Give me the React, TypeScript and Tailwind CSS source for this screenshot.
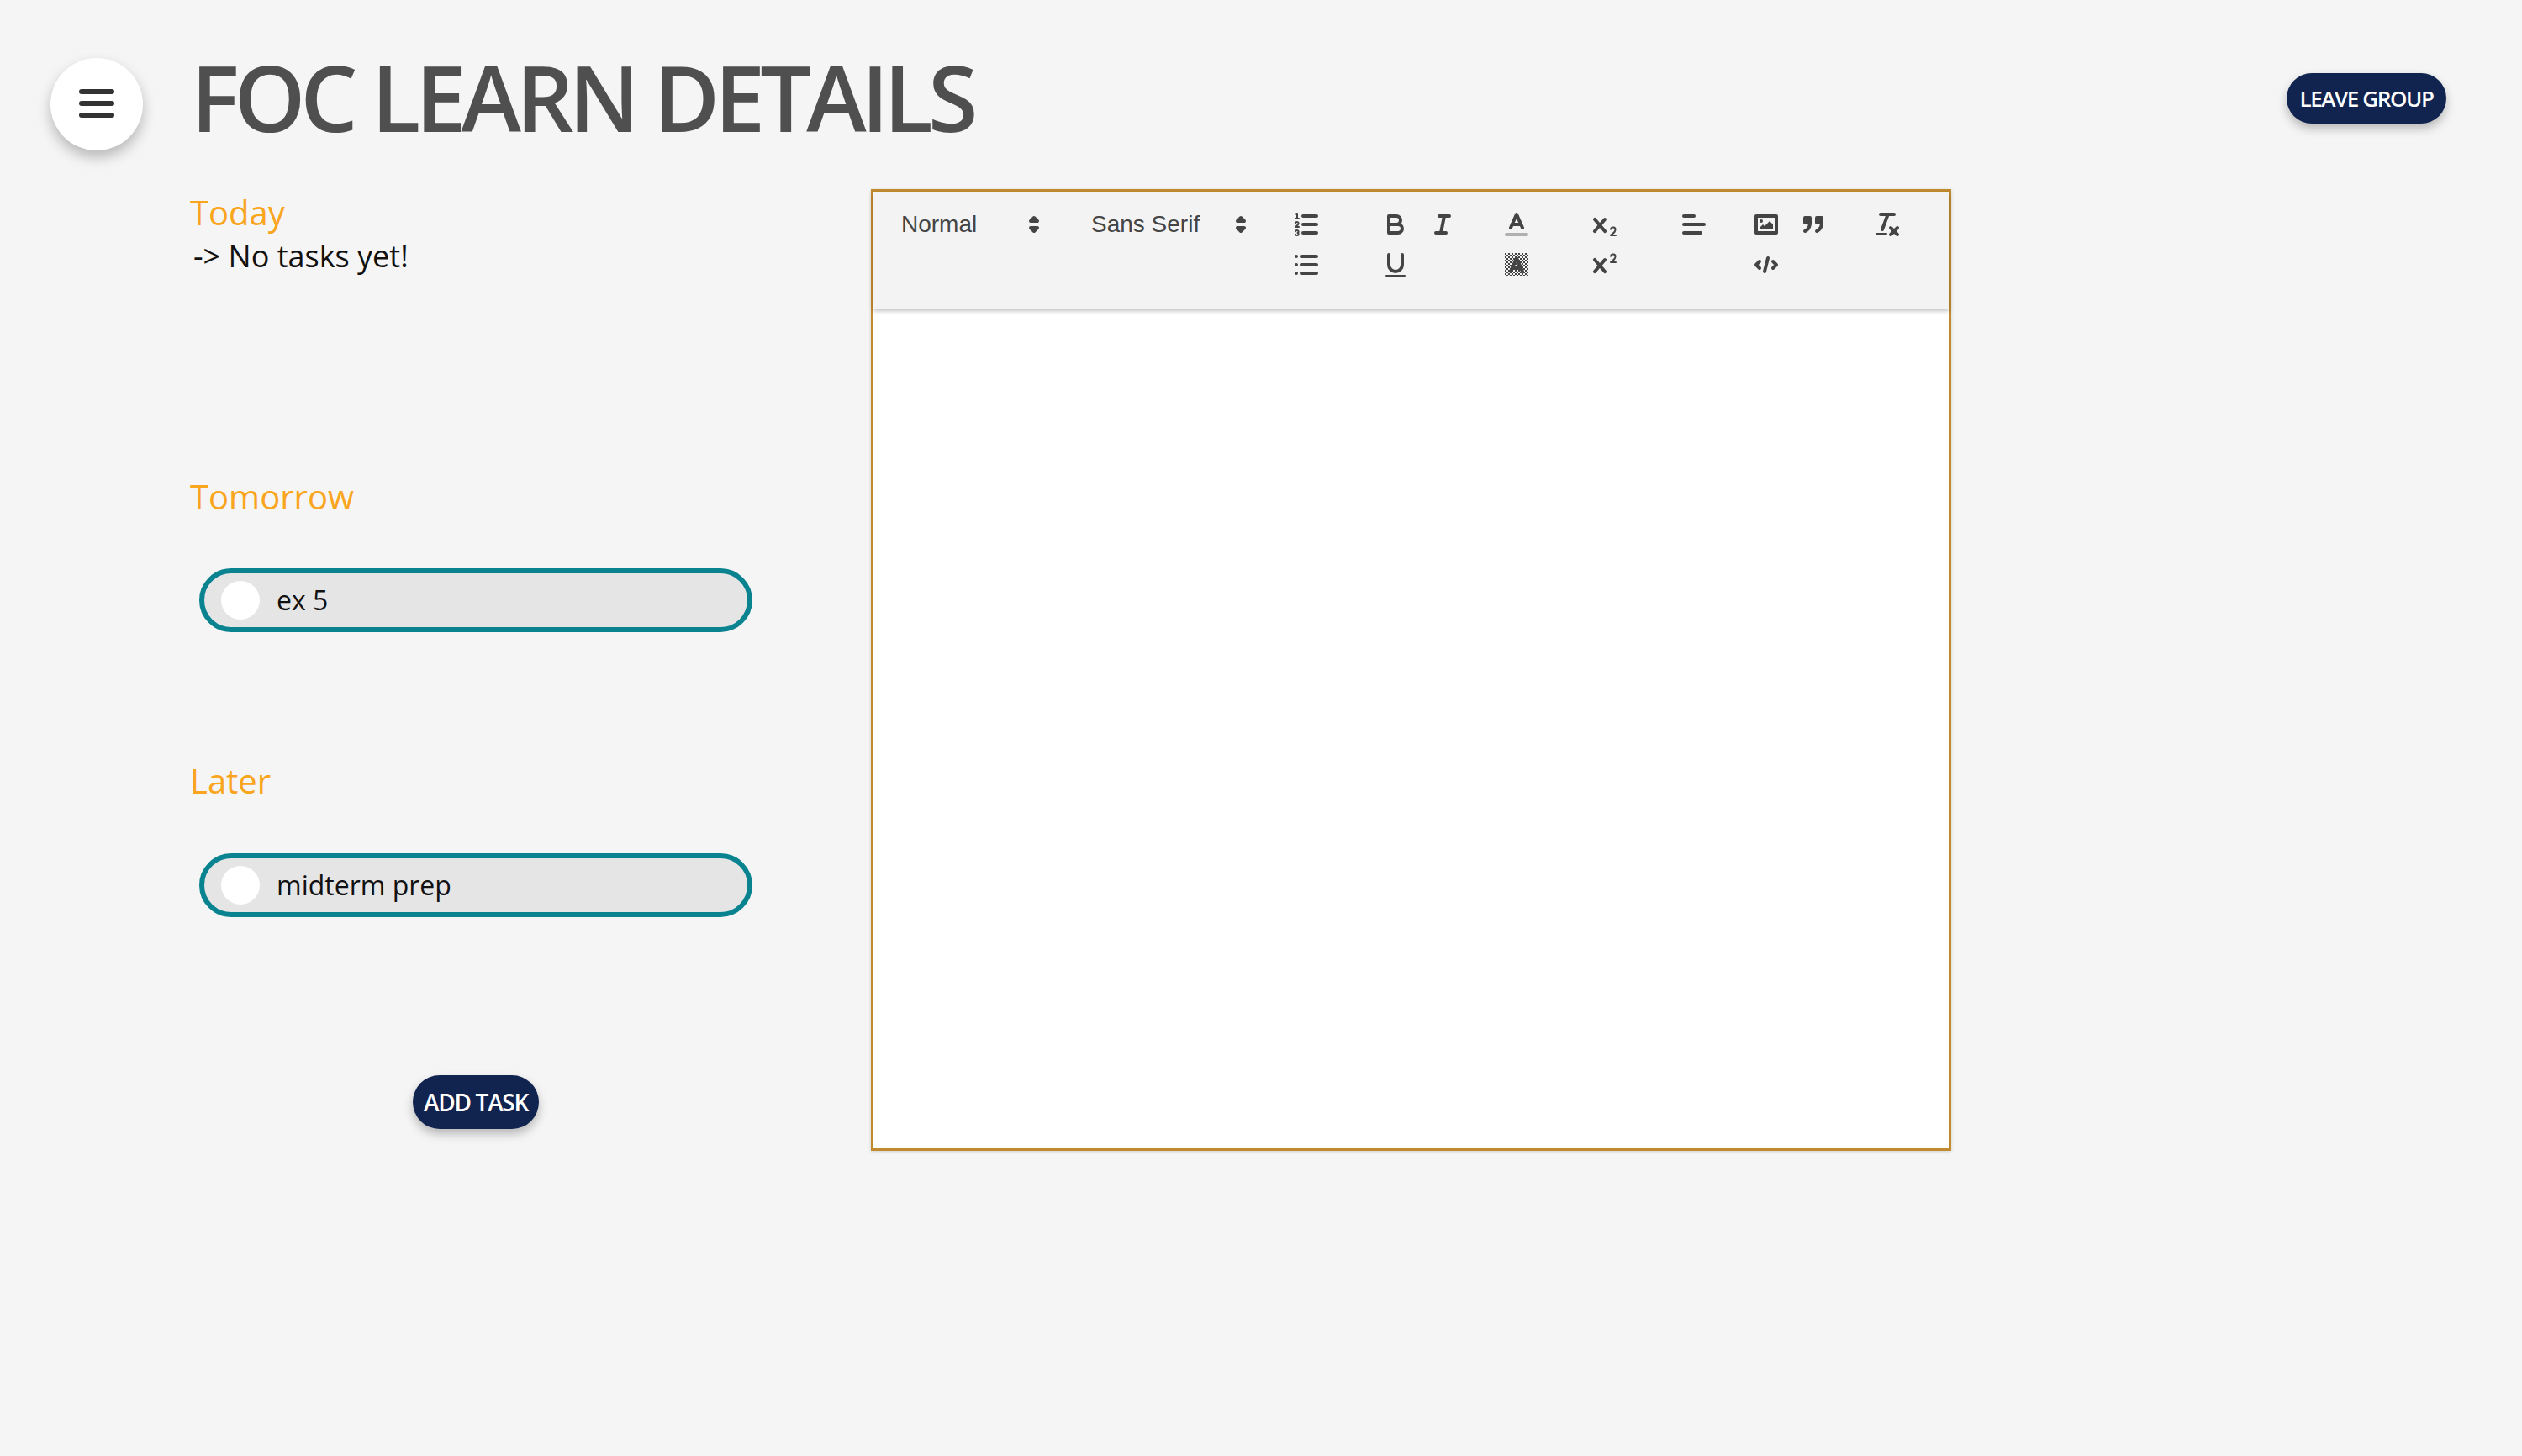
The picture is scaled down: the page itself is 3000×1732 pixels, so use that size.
import type { ReactNode } from "react";

const X_PATH =
  "M9.65,5.241a1,1,0,0,0-1.409.108L6,7.964,3.759,5.349A1,1,0,0,0,2.192,6.59178Q2.21541,6.6213,2.241,6.649L4.684,9.5,2.241,12.35A1,1,0,0,0,3.71,13.70722q0.02557-.02768.049-0.05722L6,11.036,8.241,13.65a1,1,0,1,0,1.567-1.24277Q9.78459,12.3777,9.759,12.35L7.316,9.5,9.759,6.651A1,1,0,0,0,9.65,5.241Z";

const QlIcon = ({ children }: { children: ReactNode }) => (
  <svg
    viewBox="0 0 18 18"
    className="block w-9 h-9"
    fill="none"
    stroke="#444"
    strokeWidth="2"
    strokeLinecap="round"
    strokeLinejoin="round"
  >
    {children}
  </svg>
);

const Btn = ({ children }: { children?: ReactNode }) => (
  <div className="w-14 h-12 flex items-center justify-center">
    {children && <QlIcon>{children}</QlIcon>}
  </div>
);

const Arrows = () => (
  <svg viewBox="0 0 18 18" className="block w-9 h-9" fill="#444" stroke="#444" strokeWidth="2" strokeLinejoin="round">
    <polygon points="7 11 9 13 11 11 7 11" />
    <polygon points="7 7 9 5 11 7 7 7" />
  </svg>
);

const Picker = ({ label, width }: { label: string; width: string }) => (
  <div className={`${width} h-12 pl-4 pr-1 flex items-center justify-between text-[28px] text-[#444] font-['Liberation_Sans',sans-serif]`}>
    <span>{label}</span>
    <Arrows />
  </div>
);

const TaskPill = ({ title }: { title: string }) => (
  <div className="w-[658px] h-[76px] ml-3 rounded-full border-[6px] border-[#0a8391] bg-[#e5e5e5] flex items-center pl-5">
    <div className="w-[46px] h-[46px] rounded-full bg-white" />
    <span className="ml-5 text-[32px] text-[#111]">{title}</span>
  </div>
);

const Toolbar = () => (
  <div className="h-[139px] bg-[#f3f3f3] shadow-[0_3px_5px_rgba(0,0,0,0.25)] pl-[17px] pt-[15px] flex items-start relative">
    <Picker label="Normal" width="w-[196px]" />
    <div className="ml-[30px]">
      <Picker label="Sans Serif" width="w-[216px]" />
    </div>
    <div className="ml-[28px] w-14">
      <Btn>
        <line x1="7" x2="15" y1="4" y2="4" />
        <line x1="7" x2="15" y1="9" y2="9" />
        <line x1="7" x2="15" y1="14" y2="14" />
        <line strokeWidth="1" x1="2.5" x2="4.5" y1="5.5" y2="5.5" />
        <path
          fill="#444"
          stroke="none"
          d="M3.5,6A0.5,0.5,0,0,1,3,5.5V3.085l-0.276.138A0.5,0.5,0,0,1,2.053,3c-0.124-.247-0.023-0.324.224-0.447l1-.5A0.5,0.5,0,0,1,4,2.5v3A0.5,0.5,0,0,1,3.5,6Z"
        />
        <path strokeWidth="1" d="M4.5,10.5h-2c0-.234,1.85-1.076,1.85-2.234A0.959,0.959,0,0,0,2.5,8.156" />
        <path
          strokeWidth="1"
          d="M2.5,14.846a0.959,0.959,0,0,0,1.85-.109A0.7,0.7,0,0,0,3.75,14a0.688,0.688,0,0,0,.6-0.736,0.959,0.959,0,0,0-1.85-.109"
        />
      </Btn>
      <Btn>
        <line x1="6" x2="15" y1="4" y2="4" />
        <line x1="6" x2="15" y1="9" y2="9" />
        <line x1="6" x2="15" y1="14" y2="14" />
        <line x1="3" x2="3" y1="4" y2="4" />
        <line x1="3" x2="3" y1="9" y2="9" />
        <line x1="3" x2="3" y1="14" y2="14" />
      </Btn>
    </div>
    <div className="ml-[50px] w-28 flex flex-wrap">
      <Btn>
        <path d="M5,4H9.5A2.5,2.5,0,0,1,12,6.5v0A2.5,2.5,0,0,1,9.5,9H5A0,0,0,0,1,5,9V4A0,0,0,0,1,5,4Z" />
        <path d="M5,9h5.5A2.5,2.5,0,0,1,13,11.5v0A2.5,2.5,0,0,1,10.5,14H5a0,0,0,0,1,0,0V9A0,0,0,0,1,5,9Z" />
      </Btn>
      <Btn>
        <line x1="7" x2="13" y1="4" y2="4" />
        <line x1="5" x2="11" y1="14" y2="14" />
        <line x1="8" x2="10" y1="14" y2="4" />
      </Btn>
      <Btn>
        <path d="M5,3V9a4.012,4.012,0,0,0,4,4H9a4.012,4.012,0,0,0,4-4V3" />
        <rect fill="#444" stroke="none" height="1" rx="0.5" ry="0.5" width="12" x="3" y="15" />
      </Btn>
    </div>
    <div className="ml-[32px] w-14">
      <Btn>
        <line stroke="#b0b0b0" x1="3" x2="15" y1="15" y2="15" />
        <polyline points="5.5 11 9 3 12.5 11" />
        <line x1="11.63" x2="6.38" y1="9" y2="9" />
      </Btn>
      <Btn>
        <defs>
          <pattern id="ql-bg-check" width="2" height="2" patternUnits="userSpaceOnUse">
            <rect x="0" y="0" width="1" height="1" fill="#444" stroke="none" />
            <rect x="1" y="1" width="1" height="1" fill="#444" stroke="none" />
          </pattern>
        </defs>
        <rect x="2" y="2" width="14" height="13.5" fill="url(#ql-bg-check)" stroke="none" />
        <polyline points="5.5 13 9 5 12.5 13" />
        <line x1="11.63" x2="6.38" y1="11" y2="11" />
      </Btn>
    </div>
    <div className="ml-[49px] w-14">
      <Btn>
        <path fill="#444" stroke="none" d={X_PATH} />
        <path
          fill="#444"
          stroke="none"
          d="M15.5,15H13.861a3.858,3.858,0,0,0,1.914-2.975,1.8,1.8,0,0,0-1.6-1.751A1.921,1.921,0,0,0,12.021,11.7a0.50013,0.50013,0,1,0,.957.291h0a0.914,0.914,0,0,1,1.053-.725,0.81,0.81,0,0,1,.744.762c0,1.076-1.16971,1.86982-1.93971,2.43082A1.45639,1.45639,0,0,0,12,15.5a0.5,0.5,0,0,0,.5.5h3A0.5,0.5,0,0,0,15.5,15Z"
        />
      </Btn>
      <Btn>
        <path fill="#444" stroke="none" d={X_PATH} />
        <path
          fill="#444"
          stroke="none"
          d="M15.5,7H13.861a4.015,4.015,0,0,0,1.914-2.975,1.8,1.8,0,0,0-1.6-1.751A1.922,1.922,0,0,0,12.021,3.7a0.5,0.5,0,1,0,.957.291,0.917,0.917,0,0,1,1.053-.725,0.81,0.81,0,0,1,.744.762c0,1.077-1.164,1.925-1.934,2.486A1.423,1.423,0,0,0,12,7.5a0.5,0.5,0,0,0,.5.5h3A0.5,0.5,0,0,0,15.5,7Z"
        />
      </Btn>
    </div>
    <div className="ml-[50px] w-14">
      <Btn>
        <line x1="3" x2="15" y1="9" y2="9" />
        <line x1="3" x2="13" y1="14" y2="14" />
        <line x1="3" x2="9" y1="4" y2="4" />
      </Btn>
    </div>
    <div className="ml-[30px] w-28 flex flex-wrap">
      <Btn>
        <rect height="10" width="12" x="3" y="4" />
        <circle cx="6" cy="7" r="1" fill="#444" stroke="none" />
        <polyline fill="#444" stroke="none" points="5 12 5 11 7 9 8 10 11 7 13 9 13 12 5 12" />
      </Btn>
      <Btn>
        <rect fill="#444" height="3" width="3" x="4" y="5" />
        <rect fill="#444" height="3" width="3" x="11" y="5" />
        <path d="M7,8c0,4.031-3,5-3,5" />
        <path d="M14,8c0,4.031-3,5-3,5" />
      </Btn>
      <Btn>
        <polyline points="5 7 3 9 5 11" />
        <polyline points="13 7 15 9 13 11" />
        <line x1="10" x2="8" y1="5" y2="13" />
      </Btn>
    </div>
    <div className="ml-[32px] w-14">
      <Btn>
        <line x1="5" x2="13" y1="3" y2="3" />
        <line x1="6" x2="9.35" y1="12" y2="3" />
        <line x1="11" x2="15" y1="11" y2="15" />
        <line x1="15" x2="11" y1="11" y2="15" />
        <rect fill="#444" stroke="none" height="1" rx="0.5" ry="0.5" width="7" x="2" y="14" />
      </Btn>
    </div>
  </div>
);

const App = () => {
  return (
    <div className="min-h-[1732px] bg-[#f5f5f5] font-['Open_Sans',sans-serif]">
      <header className="h-[225px] flex items-start pl-[60px] pr-[90px]">
        <button className="mt-[69px] w-[110px] h-[110px] pb-[3px] rounded-full bg-white shadow-[0_8px_16px_rgba(0,0,0,0.25)] flex flex-col items-center justify-center gap-2">
          <span className="block w-[42px] h-1.5 rounded-full bg-[#333]" />
          <span className="block w-[42px] h-1.5 rounded-full bg-[#333]" />
          <span className="block w-[42px] h-1.5 rounded-full bg-[#333]" />
        </button>
        <h1 className="ml-[57px] mt-[42px] text-[108px] leading-[148px] font-[550] tracking-[-6.1px] text-[#4f4f4f] whitespace-nowrap">
          FOC LEARN DETAILS
        </h1>
        <button className="ml-auto mt-[87px] w-[190px] h-[60px] rounded-full bg-[#11234f] text-white text-[26px] font-semibold tracking-[-1.4px] shadow-[0_6px_12px_rgba(0,0,0,0.25)]">
          LEAVE GROUP
        </button>
      </header>
      <main className="flex items-start pl-[225px]">
        <div className="w-[682px] flex flex-col">
          <section className="h-[338px] pt-[3px]">
            <h2 className="ml-px text-[40px] leading-[50px] text-[#f9a51e]">Today</h2>
            <p className="ml-[5px] text-[36px] leading-[54px] text-[#111]">-&gt; No tasks yet!</p>
          </section>
          <section className="h-[338px] pt-[3px]">
            <h2 className="ml-px text-[40px] leading-[50px] text-[#f9a51e]">Tomorrow</h2>
            <div className="mt-[60px]">
              <TaskPill title="ex 5" />
            </div>
          </section>
          <section className="h-[378px] pt-[3px]">
            <h2 className="ml-px text-[40px] leading-[50px] text-[#f9a51e]">Later</h2>
            <div className="mt-[61px]">
              <TaskPill title="midterm prep" />
            </div>
          </section>
          <button className="ml-[266px] w-[150px] h-16 rounded-[32px] bg-[#11234f] text-white text-[28px] font-semibold tracking-[-1.3px] shadow-[0_6px_12px_rgba(0,0,0,0.25)]">
            ADD TASK
          </button>
        </div>
        <div className="ml-[129px] w-[1285px] h-[1144px] border-[3px] border-[#c08a2e] bg-white shadow-[0_1px_4px_rgba(0,0,0,0.15)]">
          <Toolbar />
        </div>
      </main>
    </div>
  );
};

export default App;
